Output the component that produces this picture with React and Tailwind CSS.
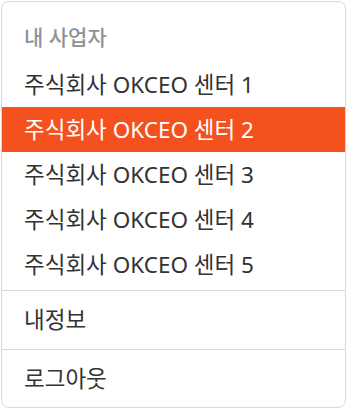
import React from "react";

const businesses = [
  "주식회사 OKCEO 센터 1",
  "주식회사 OKCEO 센터 2",
  "주식회사 OKCEO 센터 3",
  "주식회사 OKCEO 센터 4",
  "주식회사 OKCEO 센터 5",
];

export default function App() {
  const selected = 1;

  return (
    <div
      className="bg-white pt-px pl-px"
      style={{ fontFamily: '"Noto Sans", "Noto Sans CJK KR", sans-serif' }}
    >
      <div className="w-[345px] h-[407px] border border-[#d9d9d9] rounded-[8px] overflow-hidden bg-white">
        {/* 내 사업자 목록 */}
        <div className="pb-[3px]">
          <div className="pt-[23px] pb-[13px] px-[22px] text-[21px] leading-[24px] font-medium text-[#8e9399]">
            내 사업자
          </div>
          {businesses.map((name, i) => (
            <div
              key={name}
              className={
                i === selected
                  ? "h-[45px] flex items-center px-[22px] text-[22.5px] bg-[#f4511e] text-white"
                  : "h-[45px] flex items-center px-[22px] text-[22.5px] text-[#333333]"
              }
            >
              {name}
            </div>
          ))}
        </div>

        <div className="h-[59px] border-t border-[#d9d9d9] flex items-center px-[22px] text-[22.5px] text-[#333333]">
          내정보
        </div>
        <div className="h-[58px] border-t border-[#d9d9d9] flex items-center px-[22px] text-[22.5px] text-[#333333]">
          로그아웃
        </div>
      </div>
    </div>
  );
}
